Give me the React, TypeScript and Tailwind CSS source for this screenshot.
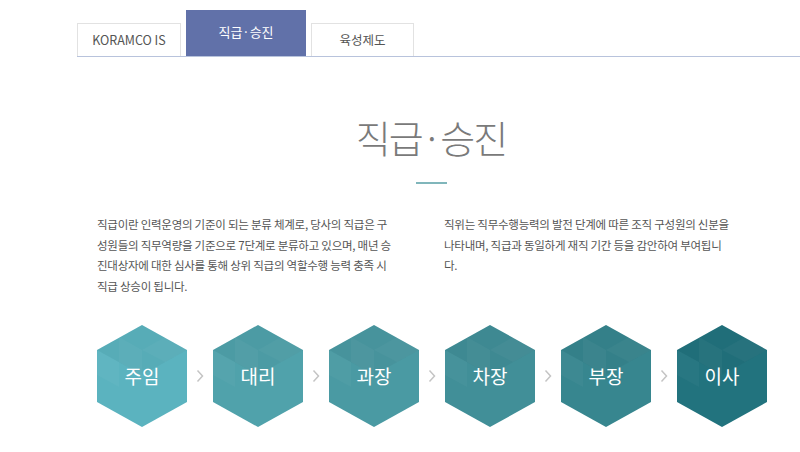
import React from 'react';

const tabs = [
    { label: 'KORAMCO IS', active: false, width: 'w-[104px]' },
    { label: '직급·승진', active: true, width: 'w-[120px]' },
    { label: '육성제도', active: false, width: 'w-[103px]' },
];

const ranks = [
    { name: '주임', color: '#5bb3bf' },
    { name: '대리', color: '#50a2ab' },
    { name: '과장', color: '#4a9aa3' },
    { name: '차장', color: '#418f98' },
    { name: '부장', color: '#37868f' },
    { name: '이사', color: '#22737e' },
];

function Hexagon({ name, color }: { name: string; color: string }) {
    return (
        <div className="relative w-[90px] h-[102px] flex items-center justify-center">
            <svg className="absolute inset-0" width="90" height="102" viewBox="0 0 90 102">
                <polygon points="45,0 90,25 90,77 45,102 0,77 0,25" fill={color} />
                {/* subtle facets */}
                <polygon points="45,0 90,25 45,50 0,25" fill="#000" opacity="0.04" />
                <polygon points="22,12 45,25 45,50 22,37" fill="#fff" opacity="0.035" />
                <polygon points="68,12 90,25 68,37 45,25" fill="#fff" opacity="0.03" />
                <polygon points="0,25 22,37 22,62 0,50" fill="#fff" opacity="0.03" />
            </svg>
            <span className="relative text-white text-[19px] leading-none">{name}</span>
        </div>
    );
}

function Chevron() {
    return (
        <div className="w-[26px] flex items-center justify-center">
            <svg width="8" height="14" viewBox="0 0 8 14">
                <polyline points="1.5,1.5 6.5,7 1.5,12.5" fill="none" stroke="#c4c4c4" strokeWidth="1.5" />
            </svg>
        </div>
    );
}

export default function App() {
    return (
        <div className="w-[800px] h-[452px] overflow-hidden bg-white font-['Noto_Sans_CJK_KR','Noto_Sans',sans-serif]">
            {/* Tabs */}
            <div className="ml-[77px] pt-[10px] flex items-end gap-[5px] border-b border-[#b8c3dc]">
                {tabs.map(t =>
                    t.active ? (
                        <div key={t.label} className={`${t.width} h-[46px] bg-[#6171a9] text-white text-[13px] flex justify-center pt-[12px]`}>
                            {t.label}
                        </div>
                    ) : (
                        <div key={t.label} className={`${t.width} h-[33px] border border-b-0 border-[#e2e2e2] text-[#555] text-[12.5px] flex items-center justify-center`}>
                            {t.label}
                        </div>
                    )
                )}
            </div>

            <div className="ml-[77px] w-[708px]">
                {/* Title */}
                <h1 className="mt-[52px] text-center text-[38px] leading-[56px] tracking-[-2px] font-light text-[#7a7a7a]">
                    직급·승진
                </h1>
                <div className="mx-auto mt-[17px] w-[31px] h-[2px] bg-[#80b6bb]" />

                {/* Description */}
                <div className="mt-[30px] flex text-[11.5px] leading-[20.7px] text-[#555] tracking-[-0.25px]">
                    <p className="ml-[20px] w-[300px] whitespace-nowrap">
                        직급이란 인력운영의 기준이 되는 분류 체계로, 당사의 직급은 구<br />
                        성원들의 직무역량을 기준으로 7단계로 분류하고 있으며, 매년 승<br />
                        진대상자에 대한 심사를 통해 상위 직급의 역할수행 능력 충족 시<br />
                        직급 상승이 됩니다.
                    </p>
                    <p className="ml-[47px] w-[300px] whitespace-nowrap">
                        직위는 직무수행능력의 발전 단계에 따른 조직 구성원의 신분을<br />
                        나타내며, 직급과 동일하게 재직 기간 등을 감안하여 부여됩니<br />
                        다.
                    </p>
                </div>

                {/* Rank hexagons */}
                <div className="mt-[28px] ml-[20px] flex">
                    {ranks.map((r, i) => (
                        <React.Fragment key={r.name}>
                            {i > 0 && <Chevron />}
                            <Hexagon name={r.name} color={r.color} />
                        </React.Fragment>
                    ))}
                </div>
            </div>
        </div>
    );
}
